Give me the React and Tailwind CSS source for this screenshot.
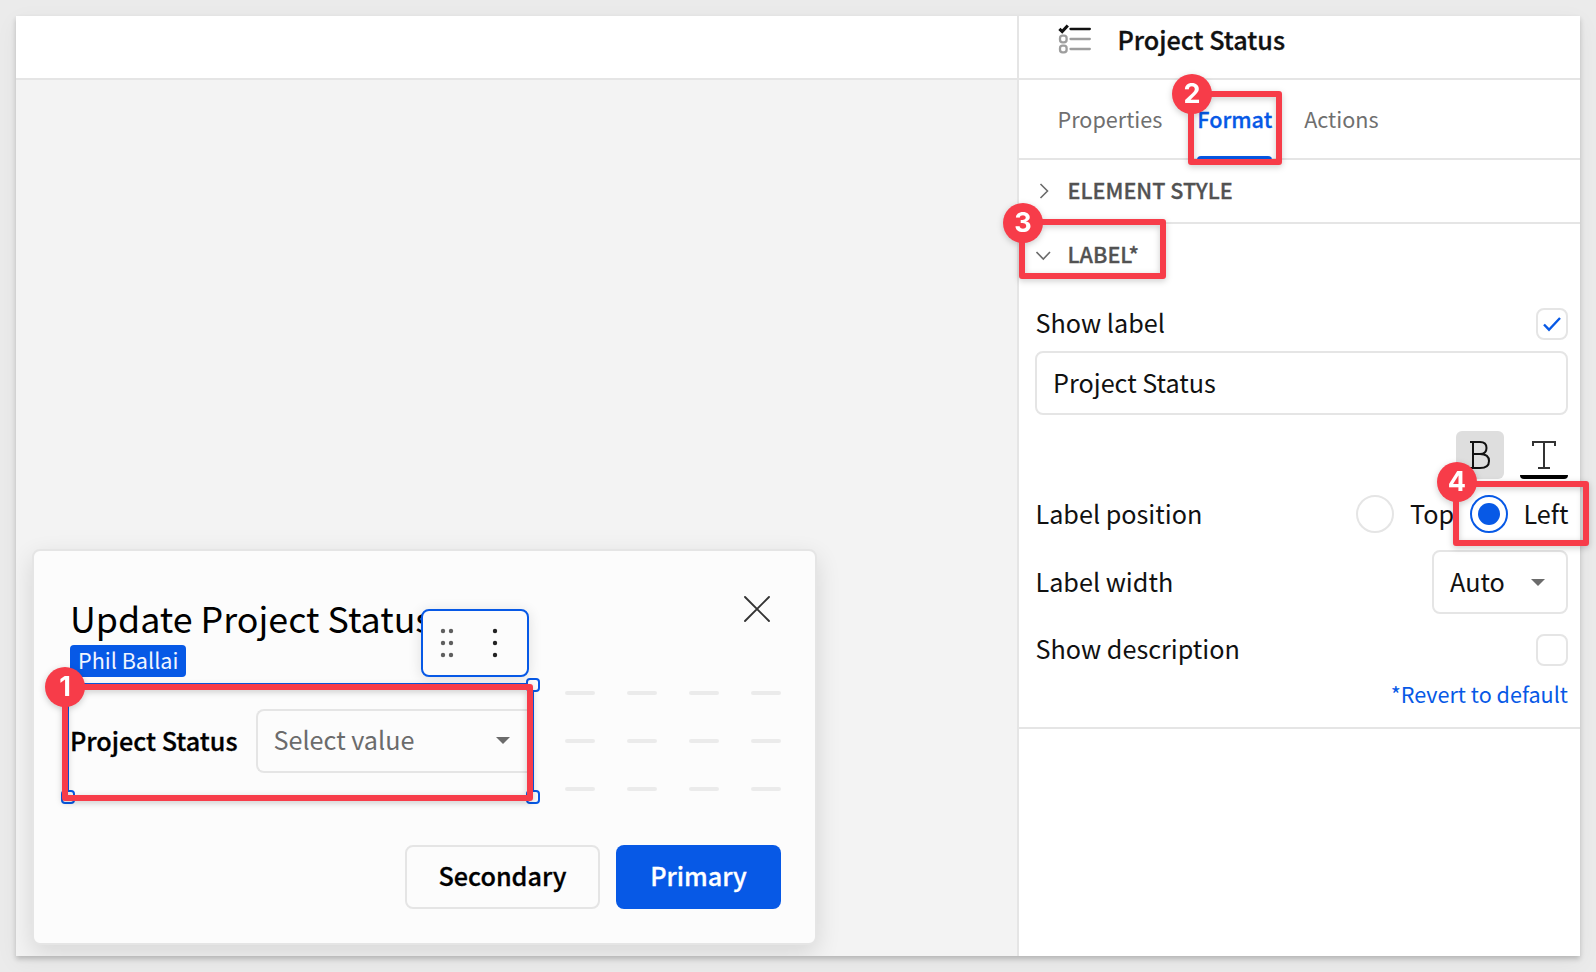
const Callout = ({ n, box, dot }) => (
  <div className={`absolute z-20 rounded-[3px] border-[6px] border-[#f73c49] drop-shadow-[0_2px_3px_rgba(0,0,0,0.2)] ${box}`}>
    <span className={`absolute flex size-10 items-center justify-center rounded-full bg-[#f73c49] pb-px font-[Inter] text-[27px] leading-none font-bold text-white ${dot}`}>
      {n}
    </span>
  </div>
);

const Caret = ({ className }) => (
  <svg className={className} width="14" height="7" viewBox="0 0 14 7" fill="#6b6b6b"><path d="M0 0h14L7 7z" /></svg>
);

const Handle = ({ className }) => (
  <span className={`absolute size-[14px] rounded-[4px] border-2 border-[#0759e6] bg-[#fcfcfc] ${className}`} />
);

const Checkbox = ({ checked }) => (
  <span className="flex size-8 items-center justify-center rounded-lg border-2 border-[#e5e5e5]">
    {checked && (
      <svg width="20" height="16" viewBox="0 0 20 16" fill="none" stroke="#0759e6" strokeWidth="2.4"><path d="M2 8.5l5 5.2L18 2" /></svg>
    )}
  </span>
);

const Radio = ({ checked }) => (
  <span className={`flex size-[38px] shrink-0 items-center justify-center rounded-full border-2 ${checked ? "border-[#0759e6]" : "border-[#e5e5e5]"}`}>
    {checked && <span className="size-[22px] rounded-full bg-[#0759e6]" />}
  </span>
);

function ModalCard() {
  return (
    <div className="relative mb-[11px] ml-4 flex h-[396px] w-[785px] flex-col rounded-lg border-2 border-[#e5e5e5] bg-[#fcfcfc] pr-[34px] pl-9 shadow-[0_8px_24px_rgba(0,0,0,0.12)]">
      <div className="flex h-[94px] items-start justify-between">
        <h1 className="mt-[39px] text-[35.8px] leading-[54px] font-normal whitespace-nowrap text-black">Update Project Status</h1>
        <svg className="mt-[45px] mr-[11px]" width="26" height="26" viewBox="0 0 26 26" stroke="#333" strokeWidth="1.9" strokeLinecap="round"><path d="M1 1l24 24M25 1L1 25" /></svg>
      </div>
      <span className="flex h-8 w-[116px] items-center rounded-[4px] bg-[#0759e6] pb-[2px] pl-2 text-[21.6px] leading-none text-[#f0f5ff]">Phil Ballai</span>
      <div className="mt-[6px] flex h-[115px] items-center justify-between">
        <div className="relative -ml-[3px] flex h-[115px] w-[467px] items-center border-2 border-[#0759e6] pl-px">
          <span className="mb-[2px] w-[186px] text-[25.2px] leading-9 font-medium whitespace-nowrap text-black [-webkit-text-stroke:0.3px]">Project Status</span>
          <div className="flex h-16 flex-1 items-center justify-between rounded-l-lg border-2 border-r-0 border-[#e5e5e5] pr-[22px] pl-[15.5px] text-[25.2px] leading-9 text-[#6b6b6b]">
            <span className="mb-[3px]">Select value</span>
            <Caret />
          </div>
          <Handle className="-top-[7px] -right-[8px]" />
          <Handle className="-right-[8px] -bottom-[8px]" />
          <Handle className="-bottom-[8px] -left-[8px]" />
          <div className="absolute right-[3px] bottom-[119px] z-10 flex h-[68px] w-[108px] items-center rounded-lg border-2 border-[#0759e6] bg-[#fcfcfc] shadow-[0_2px_14px_rgba(0,0,0,0.12)]">
            <svg width="104" height="64" viewBox="0 0 104 64">
              <g fill="#5f5f5f">
                <circle cx="20" cy="20" r="2.2" /><circle cx="28" cy="20" r="2.2" />
                <circle cx="20" cy="32" r="2.2" /><circle cx="28" cy="32" r="2.2" />
                <circle cx="20" cy="44" r="2.2" /><circle cx="28" cy="44" r="2.2" />
              </g>
              <g fill="#222"><circle cx="72" cy="20" r="2.2" /><circle cx="72" cy="32" r="2.2" /><circle cx="72" cy="44" r="2.2" /></g>
            </svg>
          </div>
        </div>
        <div className="mt-px grid grid-cols-4 gap-x-8 gap-y-11">
          {Array.from({ length: 12 }, (_, i) => <span key={i} className="h-1 w-[30px] rounded-full bg-[#ebebeb]" />)}
        </div>
      </div>
      <div className="mt-[47px] flex justify-end gap-4 text-[25.2px] leading-9 font-medium [-webkit-text-stroke:0.3px]">
        <button className="h-16 w-[195px] rounded-lg border-2 border-[#e5e5e5] pb-1 text-black">Secondary</button>
        <button className="h-16 w-[165px] rounded-lg bg-[#0759e6] pb-1 text-white">Primary</button>
      </div>
    </div>
  );
}

function Inspector() {
  return (
    <aside className="flex w-[563px] flex-col border-l-2 border-[#e5e5e5] bg-white">
      <header className="flex h-16 items-start border-b-2 border-[#e5e5e5] pl-[39px]">
        <svg className="mt-2" width="34" height="30" viewBox="0 0 34 30" fill="none" strokeWidth="2.3" strokeLinecap="round">
          <g stroke="#111"><path d="M1.4 4.8l2.8 2.7L9.800 1.500" strokeWidth="3.1" strokeLinecap="butt" /><path d="M12.500 5h19.300" /></g>
          <g stroke="#9e9e9e"><rect x="2" y="11.7" width="6.6" height="6.6" rx="2.6" /><rect x="2" y="21.7" width="6.6" height="6.6" rx="2.6" /><path d="M12.500 15h19.300M12.500 25h19.300" /></g>
        </svg>
        <h2 className="mt-[5px] ml-[25.5px] text-[25.2px] leading-9 font-medium [-webkit-text-stroke:0.3px]">Project Status</h2>
      </header>
      <nav className="flex h-20 gap-[35px] border-b-2 border-[#e5e5e5] pl-[38.5px] text-[21.6px] text-[#6f6f6f]">
        <span className="pt-[23px] leading-8">Properties</span>
        <span className="flex flex-col justify-between pt-[23px] leading-8 font-medium text-[#0759e6] [-webkit-text-stroke:0.3px]">
          Format<i className="-mb-[2px] h-1 rounded-t-full bg-[#0759e6]" />
        </span>
        <span className="-ml-[3px] pt-[23px] leading-8">Actions</span>
      </nav>
      <div className="flex h-16 items-center border-b-2 border-[#e5e5e5] pl-[17px] text-[21.6px] leading-8 font-medium text-[#525252]">
        <svg width="16" height="16" viewBox="0 0 16 16" fill="none" stroke="#6b6b6b" strokeWidth="1.6"><path d="M4.500 1l7 7-7 7" /></svg>
        <span className="mb-[2px] ml-[15.5px] [-webkit-text-stroke:0.3px]">ELEMENT STYLE</span>
      </div>
      <section className="flex h-[505px] flex-col border-b-2 border-[#e5e5e5] pr-3 pl-4 text-[25.2px] leading-9">
        <div className="flex h-[62px] shrink-0 items-center pl-px text-[21.6px] font-medium text-[#525252]">
          <svg width="16" height="16" viewBox="0 0 16 16" fill="none" stroke="#6b6b6b" strokeWidth="1.6"><path d="M0.500 5l6.800 7L14 5" /></svg>
          <span className="mb-[2px] ml-[15.5px] [-webkit-text-stroke:0.3px]">LABEL*</span>
        </div>
        <div className="mt-[22px] flex h-8 items-center justify-between"><span className="mb-1 pl-[0.5px]">Show label</span><Checkbox checked /></div>
        <div className="mt-[11px] flex h-16 items-center rounded-lg border-2 border-[#e5e5e5] pb-[2px] pl-4">Project Status</div>
        <div className="mt-4 flex h-12 justify-end gap-4">
          <span className="flex size-12 items-center justify-center rounded-md bg-[#dedede]">
            <svg width="24" height="32" viewBox="0 0 24 32" fill="none" stroke="#111" strokeWidth="2"><path d="M2 3h10c4 0 6.500 2 6.500 6s-2.500 6-6.500 6H5M12 15c5 0 9 2 9 7s-4 7-9 7H2M5 3v26" /></svg>
          </span>
          <span className="flex size-12 justify-center rounded-b-[4px] border-b-4 border-black">
            <svg className="mt-2" width="26" height="32" viewBox="0 0 26 32" fill="none" stroke="#333" strokeWidth="2"><path d="M2 7V3h22v4M13 3v26M7 29h12" /></svg>
          </span>
        </div>
        <div className="mt-4 flex h-[38px] items-center">
          <span className="mb-[2px] flex-1 pl-[0.5px]">Label position</span>
          <span className="flex w-[114px] items-center gap-4"><Radio /><span className="mb-[2px]">Top</span></span>
          <span className="flex w-[98px] shrink-0 items-center gap-[15.5px]"><Radio checked /><span className="mb-[2px]">Left</span></span>
        </div>
        <div className="mt-[17px] flex h-16 items-center justify-between">
          <span className="mb-[2px] pl-[0.5px]">Label width</span>
          <span className="flex h-16 w-[136px] items-center justify-between rounded-lg border-2 border-[#e5e5e5] pr-[21px] pl-4"><span className="mb-[2px]">Auto</span><Caret /></span>
        </div>
        <div className="mt-5 flex h-8 items-center justify-between"><span className="mb-1 pl-[0.5px]">Show description</span><Checkbox /></div>
        <a className="mt-[10px] self-end text-[21.6px] text-[#0759e6]">*Revert to default</a>
      </section>
    </aside>
  );
}

export default function App() {
  return (
    <div className="relative h-[972px] w-[1596px] overflow-hidden bg-[#ebebeb] p-4 font-['Noto_Sans_CJK_SC','Source_Sans_Pro',sans-serif] text-[#111]">
      <div className="flex h-[940px] w-[1564px] shadow-[0_3px_5px_rgba(0,0,0,0.2),0_6px_22px_rgba(0,0,0,0.05)]">
        <main className="flex flex-1 flex-col justify-between overflow-hidden bg-[#f3f3f3]">
          <div className="h-16 border-b-2 border-[#e5e5e5] bg-white" />
          <ModalCard />
        </main>
        <Inspector />
      </div>
      <Callout n={1} box="left-[61.5px] top-[683.5px] h-[117px] w-[471.5px]" dot="-left-[22.5px] -top-[22.5px]" />
      <Callout n={2} box="left-[1187.5px] top-[91px] h-[73.5px] w-[94px]" dot="-left-[21.5px] -top-[23px]" />
      <Callout n={3} box="left-[1019px] top-[219px] h-[60px] w-[146.5px]" dot="-left-[22px] -top-[22px]" />
      <Callout n={4} box="left-[1453px] top-[481px] h-[65px] w-[136px]" dot="-left-[22px] -top-[25px]" />
    </div>
  );
}
